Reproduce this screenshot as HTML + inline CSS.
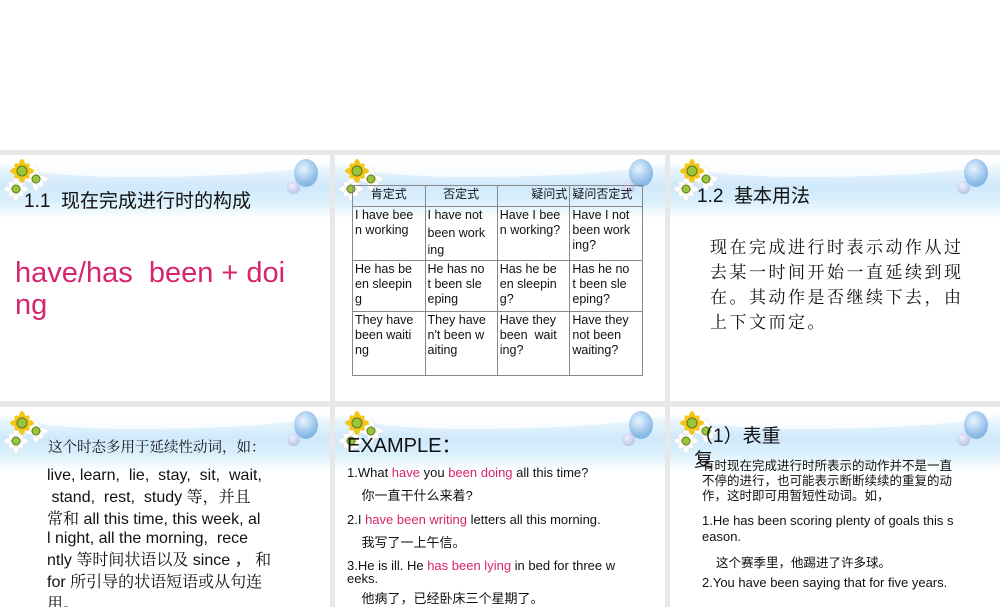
<!DOCTYPE html>
<html><head><meta charset="utf-8"><style>
*{margin:0;padding:0;box-sizing:border-box}
body{width:1000px;height:600px;background:#e8e8e8;position:relative;overflow:hidden;font-family:"Liberation Sans","Noto Sans CJK SC",sans-serif;color:#111}
.top{position:absolute;left:0;top:0;width:1000px;height:150px;background:#fff}
.s{position:absolute;background:#fff;overflow:hidden}
.hdr{position:absolute;left:0;top:4px;width:100%;height:60px;background:linear-gradient(180deg,#fff 0%,#e6f4fd 20%,#cfe9fb 45%,#d9effc 70%,#fff 100%)}
.hdr:after{content:"";position:absolute;left:0;top:0;width:100%;height:18px;background:#fff;border-radius:0 0 60% 40%/0 0 100% 100%;opacity:.8}
.b1{position:absolute;right:12px;top:4px;width:24px;height:28px;border-radius:50%;background:radial-gradient(circle at 40% 35%,#e8f4ff,#8fbde8 60%,#6ea6dd)}
.b2{position:absolute;right:30px;top:26px;width:13px;height:13px;border-radius:50%;background:radial-gradient(circle at 40% 35%,#eef0ff,#a9b2e0)}
.fl{position:absolute;left:2px;top:2px;width:50px;height:44px}
.p{color:#d6256e}
.t{position:absolute;white-space:nowrap}
table{border-collapse:collapse;font-size:12.5px;line-height:15px}
td{border:1px solid #888;vertical-align:top;padding:1px 2px;width:73px}
</style></head><body>
<div class="top"></div>

<svg width="0" height="0" style="position:absolute"><defs>
<g id="flw">
<g fill="#fff" stroke="#ddd" stroke-width=".5">
<ellipse cx="14" cy="32" rx="12" ry="4"/><ellipse cx="14" cy="32" rx="4" ry="12"/><ellipse cx="14" cy="32" rx="10" ry="4" transform="rotate(45 14 32)"/><ellipse cx="14" cy="32" rx="10" ry="4" transform="rotate(-45 14 32)"/>
<ellipse cx="34" cy="22" rx="12" ry="4"/><ellipse cx="34" cy="22" rx="4" ry="12"/><ellipse cx="34" cy="22" rx="10" ry="4" transform="rotate(45 34 22)"/>
</g>
<g fill="#f5c518"><ellipse cx="20" cy="14" rx="12" ry="4"/><ellipse cx="20" cy="14" rx="4" ry="12"/><ellipse cx="20" cy="14" rx="10" ry="4" transform="rotate(45 20 14)"/><ellipse cx="20" cy="14" rx="10" ry="4" transform="rotate(-45 20 14)"/></g>
<circle cx="20" cy="14" r="5" fill="#9cc43a" stroke="#5a7a1a"/>
<circle cx="34" cy="22" r="4" fill="#9cc43a" stroke="#5a7a1a"/>
<circle cx="14" cy="32" r="4" fill="#9cc43a" stroke="#5a7a1a"/>
</g></defs></svg>

<!-- slide 1 -->
<div class="s" style="left:0;top:155px;width:330px;height:246px">
<div class="hdr"></div><div class="b1"></div><div class="b2"></div>
<svg class="fl" viewBox="0 0 50 44"><use href="#flw"/></svg>
<div class="t" style="left:24px;top:31px;font-size:19px">1.1&nbsp; 现在完成进行时的构成</div>
<div class="t p" style="left:15px;top:102px;font-size:29px;line-height:32px">have/has&nbsp; been + doi<br>ng</div>
</div>

<!-- slide 2 -->
<div class="s" style="left:335px;top:155px;width:330px;height:246px">
<div class="hdr"></div><div class="b1"></div><div class="b2"></div>
<svg class="fl" viewBox="0 0 50 44"><use href="#flw"/></svg>
<table style="position:absolute;left:17px;top:30px;width:291px">
<tr style="height:21px;font-size:12px"><td style="text-align:center">肯定式</td><td style="text-align:center">否定式</td><td style="text-align:right">疑问式</td><td>疑问否定式</td></tr>
<tr style="height:54px"><td>I have bee<br>n working</td><td>I have not<br><span style="line-height:20px">been work</span><br>ing</td><td>Have I bee<br>n working?</td><td>Have I not<br>been work<br>ing?</td></tr>
<tr style="height:51px"><td>He has be<br>en sleepin<br>g</td><td>He has no<br>t been sle<br>eping</td><td>Has he be<br>en sleepin<br>g?</td><td>Has he no<br>t been sle<br>eping?</td></tr>
<tr style="height:64px"><td>They have<br>been waiti<br>ng</td><td>They have<br>n't been w<br>aiting</td><td>Have they<br>been&nbsp; wait<br>ing?</td><td>Have they<br>not been<br>waiting?</td></tr>
</table>
</div>

<!-- slide 3 -->
<div class="s" style="left:670px;top:155px;width:330px;height:246px">
<div class="hdr"></div><div class="b1"></div><div class="b2"></div>
<svg class="fl" viewBox="0 0 50 44"><use href="#flw"/></svg>
<div class="t" style="left:27px;top:26px;font-size:19px">1.2&nbsp; 基本用法</div>
<div class="t" style="left:40px;top:78px;font-size:17px;line-height:25px;letter-spacing:2.5px;font-family:'Noto Serif CJK SC',serif">现在完成进行时表示动作从过<br>去某一时间开始一直延续到现<br>在。其动作是否继续下去，由<br>上下文而定。</div>
</div>

<!-- slide 4 -->
<div class="s" style="left:0;top:407px;width:330px;height:200px">
<div class="hdr"></div><div class="b1"></div><div class="b2"></div>
<svg class="fl" viewBox="0 0 50 44"><use href="#flw"/></svg>
<div class="t" style="left:48px;top:29px;font-size:14.5px;font-family:'Noto Serif CJK SC',serif">这个时态多用于延续性动词，如：</div>
<div class="t" style="left:47px;top:59px;font-size:16px;line-height:19.8px">live, learn,&nbsp; lie,&nbsp; stay,&nbsp; sit,&nbsp; wait,<br>&nbsp;stand,&nbsp; rest,&nbsp; study <span style="font-family:'Noto Serif CJK SC',serif">等，并且</span><br><span style="font-family:'Noto Serif CJK SC',serif">常和</span> all this time, this week, al<br>l night, all the morning,&nbsp; rece<br>ntly <span style="font-family:'Noto Serif CJK SC',serif">等时间状语以及</span> since ， <span style="font-family:'Noto Serif CJK SC',serif">和</span><br>for <span style="font-family:'Noto Serif CJK SC',serif">所引导的状语短语或从句连<br>用。</span></div>
</div>

<!-- slide 5 -->
<div class="s" style="left:335px;top:407px;width:330px;height:200px">
<div class="hdr"></div><div class="b1"></div><div class="b2"></div>
<svg class="fl" viewBox="0 0 50 44"><use href="#flw"/></svg>
<div class="t" style="left:12px;top:22px;font-size:20px">EXAMPLE：</div>
<div class="t" style="left:12px;top:54px;font-size:13px;line-height:23.3px">1.What <span class="p">have</span> you <span class="p">been doing</span> all this time?<br>&nbsp;&nbsp;&nbsp;&nbsp;你一直干什么来着?<br>2.I <span class="p">have been writing</span> letters all this morning.<br>&nbsp;&nbsp;&nbsp;&nbsp;我写了一上午信。<br>3.He is ill. He <span class="p">has been lying</span> in bed for three w</div>
<div class="t" style="left:12px;top:164px;font-size:13px;line-height:16px">eeks.</div>
<div class="t" style="left:12px;top:184px;font-size:13px;line-height:16px">&nbsp;&nbsp;&nbsp;&nbsp;他病了，已经卧床三个星期了。</div>
</div>

<!-- slide 6 -->
<div class="s" style="left:670px;top:407px;width:330px;height:200px">
<div class="hdr"></div><div class="b1"></div><div class="b2"></div>
<svg class="fl" viewBox="0 0 50 44"><use href="#flw"/></svg>
<div class="t" style="left:24px;top:18px;font-size:19px;line-height:24px">（1）表重<br>复</div>
<div class="t" style="left:32px;top:52px;font-size:12.5px;line-height:15px">有时现在完成进行时所表示的动作并不是一直<br>不停的进行，也可能表示断断续续的重复的动<br>作，这时即可用暂短性动词。如，</div>
<div class="t" style="left:32px;top:106px;font-size:13px;line-height:16px">1.He has been scoring plenty of goals this s<br>eason.</div>
<div class="t" style="left:46px;top:145px;font-size:12.5px">这个赛季里，他踢进了许多球。</div>
<div class="t" style="left:32px;top:168px;font-size:13px">2.You have been saying that for five years.</div>
</div>
</body></html>
